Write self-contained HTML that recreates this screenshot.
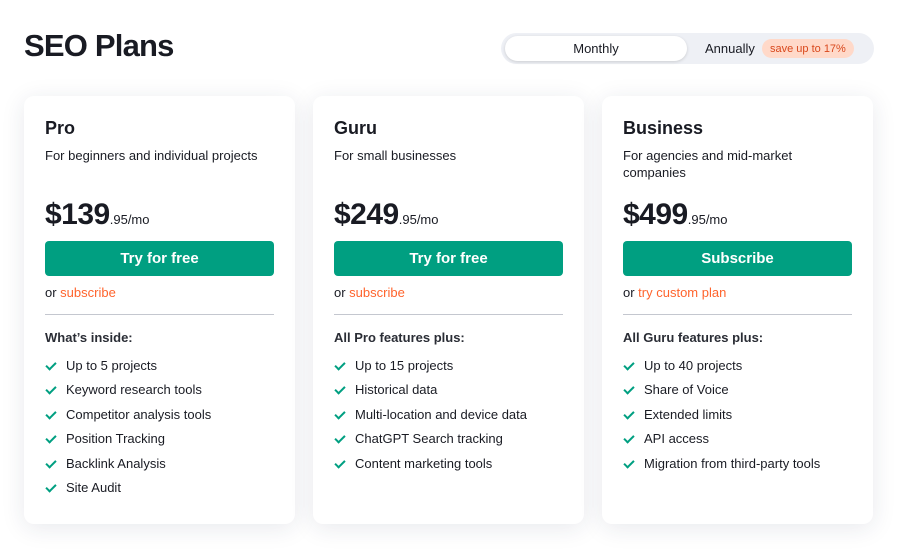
<!DOCTYPE html>
<html><head><style>
*{margin:0;padding:0;box-sizing:border-box}
body{width:900px;height:553px;background:#fff;font-family:"Liberation Sans",sans-serif;color:#191b23;position:relative;overflow:hidden}
h1{position:absolute;left:24px;top:28px;font-size:31px;font-weight:700;letter-spacing:-0.8px}
.tog{position:absolute;left:501px;top:33px;width:373px;height:31px;background:#eef0f5;border-radius:16px}
.tog .m{position:absolute;left:4px;top:3px;width:182px;height:25px;background:#fff;border-radius:13px;box-shadow:0 1px 3px rgba(0,0,0,.15);font-size:13px;text-align:center;line-height:25px}
.tog .a{position:absolute;left:204px;top:0;line-height:31px;font-size:13px}
.tog .s{position:absolute;left:261px;top:6px;height:19px;padding:0 8px;background:#ffd9c9;color:#d9481c;border-radius:10px;font-size:11px;line-height:20px}
.card{position:absolute;top:96px;width:271px;height:428px;background:#fff;border-radius:10px;box-shadow:0 4px 24px rgba(30,40,80,.10);padding:0 21px}
.card h2{margin-top:22px;font-size:18px;font-weight:700}
.d{font-size:13px;margin-top:8px;line-height:17px;height:34px}
.p{margin-top:17px;font-size:30px;font-weight:700;letter-spacing:-0.5px;height:40px}
.p small{font-size:13px;font-weight:400;letter-spacing:0}
.b{margin-top:3px;height:35px;background:#009f81;color:#fff;border-radius:4px;text-align:center;line-height:35px;font-size:15px;font-weight:700}
.o{margin-top:9px;font-size:13px}
.o span{color:#ff642d}
hr{border:0;border-top:1px solid #c4c7cf;margin-top:14px}
.w{margin-top:15px;font-size:13px;font-weight:700;color:#2a2d35}
ul{list-style:none;margin-top:13px}
li{font-size:13px;height:24.4px;padding-left:21px;position:relative}
li:before{content:"";position:absolute;left:3px;top:2px;width:4px;height:8px;border:solid #009f81;border-width:0 2px 2px 0;transform:rotate(45deg)}
</style></head><body>
<h1>SEO Plans</h1>
<div class="tog"><div class="m">Monthly</div><div class="a">Annually</div><div class="s">save up to 17%</div></div>
<div class="card" style="left:24px"><h2>Pro</h2><div class="d">For beginners and individual projects</div><div class="p">$139<small>.95/mo</small></div><div class="b">Try for free</div><div class="o">or <span>subscribe</span></div><hr><div class="w">What’s inside:</div><ul><li>Up to 5 projects</li><li>Keyword research tools</li><li>Competitor analysis tools</li><li>Position Tracking</li><li>Backlink Analysis</li><li>Site Audit</li></ul></div>
<div class="card" style="left:313px"><h2>Guru</h2><div class="d">For small businesses</div><div class="p">$249<small>.95/mo</small></div><div class="b">Try for free</div><div class="o">or <span>subscribe</span></div><hr><div class="w">All Pro features plus:</div><ul><li>Up to 15 projects</li><li>Historical data</li><li>Multi-location and device data</li><li>ChatGPT Search tracking</li><li>Content marketing tools</li></ul></div>
<div class="card" style="left:602px"><h2>Business</h2><div class="d">For agencies and mid-market companies</div><div class="p">$499<small>.95/mo</small></div><div class="b">Subscribe</div><div class="o">or <span>try custom plan</span></div><hr><div class="w">All Guru features plus:</div><ul><li>Up to 40 projects</li><li>Share of Voice</li><li>Extended limits</li><li>API access</li><li>Migration from third-party tools</li></ul></div>
</body></html>
